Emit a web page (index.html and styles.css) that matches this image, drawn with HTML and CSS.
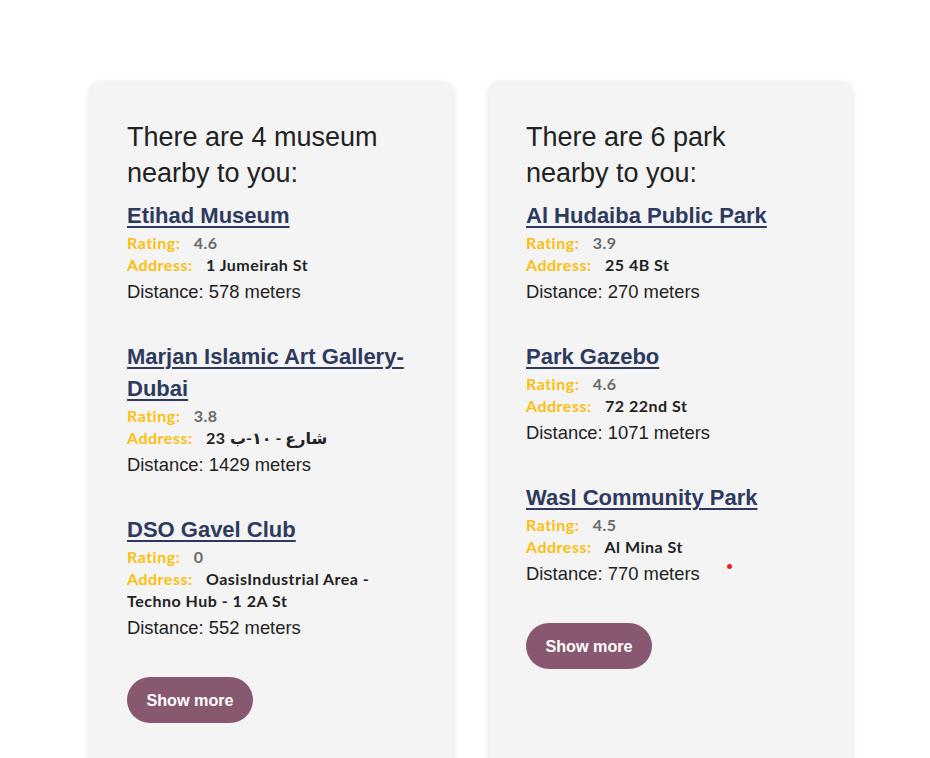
FILE: index.html
```html
<!DOCTYPE html>
<html lang="en">
<head>
<meta charset="utf-8">
<title>Nearby places</title>
<link rel="stylesheet" href="styles.css">
</head>
<body>
<main class="cards">
  <section class="card">
    <h2 class="card-title">There are 4 museum nearby to you:</h2>
    <div class="place">
      <a class="place-name" href="#">Etihad Museum</a>
      <div class="meta"><span class="label">Rating:</span> <span class="rating">4.6</span></div>
      <div class="meta"><span class="label">Address:</span> <span class="address">1 Jumeirah St</span></div>
      <div class="distance">Distance: 578 meters</div>
    </div>
    <div class="place">
      <a class="place-name" href="#">Marjan Islamic Art Gallery-Dubai</a>
      <div class="meta"><span class="label">Rating:</span> <span class="rating">3.8</span></div>
      <div class="meta"><span class="label">Address:</span> <span class="address">23 شارع - ١٠-ب</span></div>
      <div class="distance">Distance: 1429 meters</div>
    </div>
    <div class="place">
      <a class="place-name" href="#">DSO Gavel Club</a>
      <div class="meta"><span class="label">Rating:</span> <span class="rating">0</span></div>
      <div class="meta"><span class="label">Address:</span> <span class="address">OasisIndustrial Area - Techno Hub - 1 2A St</span></div>
      <div class="distance">Distance: 552 meters</div>
    </div>
    <button class="show-more" type="button">Show more</button>
  </section>
  <section class="card">
    <h2 class="card-title">There are 6 park nearby to you:</h2>
    <div class="place">
      <a class="place-name" href="#">Al Hudaiba Public Park</a>
      <div class="meta"><span class="label">Rating:</span> <span class="rating">3.9</span></div>
      <div class="meta"><span class="label">Address:</span> <span class="address">25 4B St</span></div>
      <div class="distance">Distance: 270 meters</div>
    </div>
    <div class="place">
      <a class="place-name" href="#">Park Gazebo</a>
      <div class="meta"><span class="label">Rating:</span> <span class="rating">4.6</span></div>
      <div class="meta"><span class="label">Address:</span> <span class="address">72 22nd St</span></div>
      <div class="distance">Distance: 1071 meters</div>
    </div>
    <div class="place">
      <a class="place-name" href="#">Wasl Community Park</a>
      <div class="meta"><span class="label">Rating:</span> <span class="rating">4.5</span></div>
      <div class="meta"><span class="label">Address:</span> <span class="address">Al Mina St</span></div>
      <div class="distance">Distance: 770 meters</div>
    </div>
    <button class="show-more" type="button">Show more</button>
  </section>
</main>
<span class="dot"></span>
</body>
</html>
```

FILE: styles.css
```css
html, body {
  margin: 0;
  padding: 0;
  background: #ffffff;
}

body {
  font-family: "Liberation Sans", Arial, sans-serif;
  color: #222222;
  overflow: hidden;
  height: 758px;
  position: relative;
}

.cards {
  display: flex;
  gap: 36px;
  padding: 82px 0 0 90px;
  align-items: stretch;
}

.card {
  width: 363px;
  box-sizing: border-box;
  background: #f4f4f4;
  border-radius: 10px;
  box-shadow: 0 1px 6px rgba(0, 0, 0, 0.13);
  padding: 37px 38px 60px 37px;
}

.card-title {
  margin: 0 0 9px 0;
  font-size: 27px;
  line-height: 36px;
  font-weight: normal;
  color: #222222;
}

.place {
  margin-bottom: 36px;
}

.place-name {
  display: inline;
  font-size: 22px;
  line-height: 32px;
  font-weight: bold;
  color: #2d3a5e;
  text-decoration: underline;
  text-decoration-thickness: 2px;
  text-underline-offset: 3px;
}

.meta {
  font-family: Lato, "Open Sans", "DejaVu Sans", sans-serif;
  font-size: 16px;
  letter-spacing: 0.5px;
  line-height: 22px;
  font-weight: bold;
}

.label {
  color: #fbbf10;
  margin-right: 9px;
}

.rating {
  color: #6a6a6a;
}

.address {
  color: #222222;
}

.distance {
  margin-top: 3px;
  font-size: 18.4px;
  line-height: 26px;
  color: #222222;
}

.show-more {
  display: block;
  width: 126px;
  height: 46px;
  padding: 0;
  border: none;
  border-radius: 23px;
  background: #87586f;
  color: #ffffff;
  font-family: "Liberation Sans", Arial, sans-serif;
  font-size: 16.2px;
  font-weight: bold;
  cursor: pointer;
}

.dot {
  position: absolute;
  left: 727px;
  top: 564px;
  width: 5px;
  height: 5px;
  border-radius: 50%;
  background: #e8202a;
}
```
